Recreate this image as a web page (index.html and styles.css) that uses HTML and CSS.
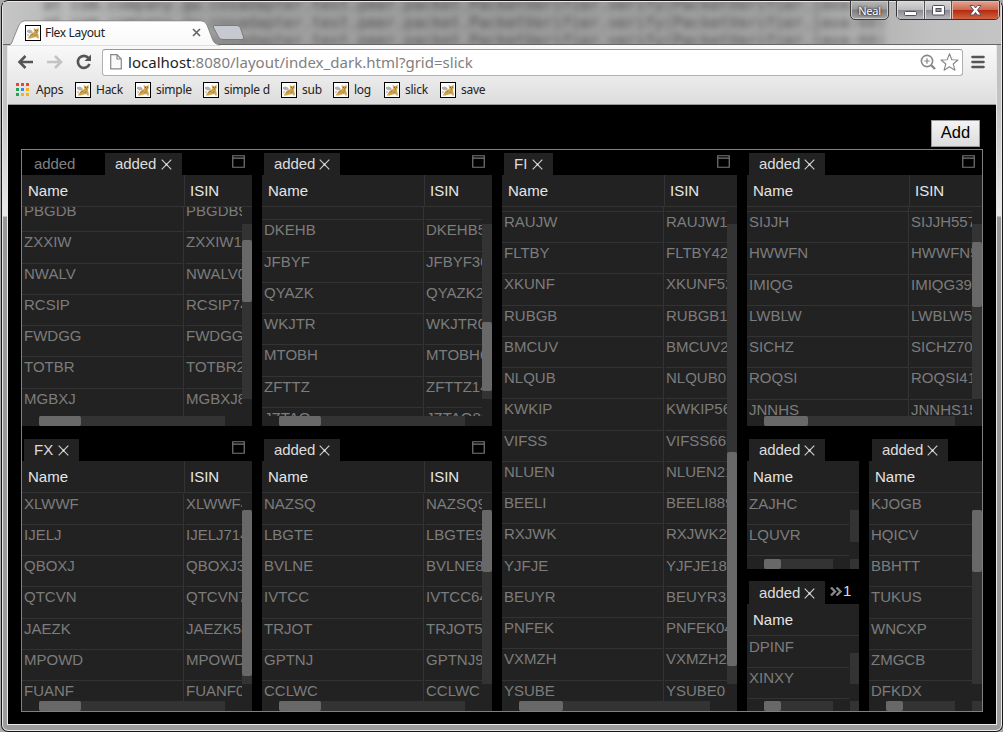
FILE: index.html
```
<!DOCTYPE html>
<html lang="en">
<head>
<meta charset="utf-8">
<title>Flex Layout</title>
<link rel="stylesheet" href="styles.css">
</head>
<body>
<svg width="0" height="0" class="defs">
  <defs>
    <symbol id="cat" viewBox="0 0 16 16">
      <rect x=".5" y=".5" width="15" height="15" fill="#fff" stroke="#000"/>
      <path d="M2 5l3-.5 2.500 1.500v2l-3 .5L2 7zM2 9.500l2-.5-1 3z" fill="#b3b2ab"/>
      <path d="M8.500 3l2 1 1.500 0 1.500-1.500.2 3.500-1 2 .8 2 .4 3.500-1.500 0-1-1.500-2.500.5-3.500 1H2.500L5 10l2-2 2.300-1z" fill="#d0a450"/>
      <path d="M10 5.500h1M12 5.300h1M11 7h1" stroke="#6b501f" stroke-width=".8"/>
      <path d="M5 10.500l3.500-1.500M9.500 10.500l2-1" stroke="#94702c" stroke-width=".7"/>
    </symbol>
    <symbol id="close" viewBox="0 0 11 11">
      <path d="M.7.7l9.600 9.600M10.300.7L.7 10.300" stroke="#ccc" stroke-width="1.200" fill="none"/>
      <rect x="4.700" y="4.700" width="1.600" height="1.600" fill="#fff"/>
    </symbol>
    <symbol id="max" viewBox="0 0 13 13">
      <path d="M.75.75h11.500v11.500H.75zM1 3.200h11" stroke="#777" stroke-width="1.200" fill="none"/>
    </symbol>
  </defs>
</svg>
<div class="window">
  <div class="titlebar">
    <div class="glass"><pre>at com.company.gw.cosadapter.test.peer.packet.PacketVerifier.verify(PacketVerifier.java:73)
at com.company.gw.cosadapter.test.peer.packet.PacketVerifier.verify(PacketVerifier.java:60)
at com.company.gw.cosadapter.test.peer.packet.PacketVerifier.verify(PacketVerifier.java:60)</pre></div>
    <div class="browser-tab">
      <svg class="tab-shape" width="240" height="26" viewBox="0 0 240 26">
        <defs><linearGradient id="tg" x1="0" y1="0" x2="0" y2="1"><stop offset="0" stop-color="#fff"/><stop offset="1" stop-color="#f8f8f8"/></linearGradient></defs>
        <path d="M0 26C5 25 5 22 7 17L12 5Q14 .8 18 .8H194Q198 .8 200 5L205 18Q207 24.500 212 24.500V26z" fill="url(#tg)" stroke="#777" stroke-width=".8"/>
        <path d="M0 25.500h212v.5H0z" fill="#f8f8f8"/>
        <path d="M207.500 5.500H230Q232.500 5.500 233.500 8L236.500 17Q237 19.500 235 19.500H216Q212.500 19.500 211.500 17L206.500 7.500Q206 5.500 207.500 5.500z" fill="#c6cad0" stroke="#737578" stroke-width=".9"/>
      </svg>
      <svg class="favicon" width="16" height="16"><use href="#cat"/></svg>
      <span class="tab-title">Flex Layout</span>
      <svg class="tab-close" width="9" height="9" viewBox="0 0 9 9"><path d="M1 1l7 7M8 1L1 8" stroke="#666" stroke-width="1.700"/></svg>
    </div>
    <div class="user-button">Neal</div>
    <div class="controls">
      <span class="ctl min"><svg width="13" height="6" viewBox="0 0 13 6"><rect x=".5" y=".5" width="12" height="4" rx="1" fill="#fff" stroke="#4e5060"/></svg></span>
      <span class="ctl restore"><svg width="13" height="11" viewBox="0 0 13 11"><rect x=".5" y=".5" width="12" height="9.500" rx="1" fill="#fff" stroke="#4e5060"/><rect x="4" y="3.500" width="5" height="3" fill="#999" stroke="#4e5060"/></svg></span>
      <span class="ctl quit"><svg width="13" height="11" viewBox="0 0 13 11"><path d="M1 .5h3.500L6.500 3 8.500.5H12L8.500 5 12 10H8.500L6.500 7.500 4.500 10H1L4.500 5z" fill="#fff" stroke="#57455a" stroke-width=".9"/></svg></span>
    </div>
  </div>
  <div class="client">
    <div class="toolbar">
      <svg class="nav" width="95" height="28" viewBox="0 0 95 28">
        <path d="M25 14H12M17.500 8L11.500 14l6 6" fill="none" stroke="#555" stroke-width="2.600"/>
        <path d="M39 14H52M47 8l6 6-6 6" fill="none" stroke="#c3c3c3" stroke-width="2.600"/>
        <path d="M80.500 10A6 6 0 1 0 81.500 16" fill="none" stroke="#555" stroke-width="2.600"/>
        <path d="M83 6.500V13h-6.500z" fill="#555"/>
      </svg>
      <div class="omnibox">
        <svg width="12" height="16" viewBox="0 0 12 16"><path d="M.7.7H7L11.300 5V14.800H.7zM7 .7V5h4.300" fill="#fafafa" stroke="#888" stroke-width="1.200"/></svg>
        <span class="url"><b>localhost</b>:8080/layout/index_dark.html?grid=slick</span>
        <svg class="end" width="42" height="20" viewBox="0 0 42 20"><circle cx="8" cy="9" r="5.600" fill="none" stroke="#888" stroke-width="1.600"/><path d="M12 13l4 4" stroke="#888" stroke-width="2.400"/><path d="M5.300 9h5.400M8 6.300v5.400" stroke="#888" stroke-width="1.200"/><path d="M30.500 1.800l2.300 5.900 6.200.3-4.800 4 1.700 6.200-5.400-3.500-5.400 3.500 1.700-6.200-4.800-4 6.200-.3z" fill="#fff" stroke="#888" stroke-width="1.100" stroke-linejoin="round"/></svg>
      </div>
      <svg class="menu" width="14" height="14" viewBox="0 0 14 14"><path d="M1.500 2h11M1.500 7h11M1.500 12h11" stroke="#555" stroke-width="2.600" stroke-linecap="round"/></svg>
    </div>
    <div class="bookmarks">
      <span class="bm"><svg class="apps" width="14" height="14" viewBox="0 0 14 14"><path d="M0 0h3v3H0zM5 0h3v3H5zM10 0h3v3h-3z" fill="#e8453c"/><path d="M0 5h3v3H0z" fill="#23a455"/><path d="M5 5h3v3H5z" fill="#3b87ee"/><path d="M10 5h3v3h-3zM5 10h3v3H5zM10 10h3v3h-3z" fill="#f4b512"/><path d="M0 10h3v3H0z" fill="#23a455"/></svg>Apps</span>
      <span class="bm"><svg width="16" height="16"><use href="#cat"/></svg>Hack</span>
      <span class="bm"><svg width="16" height="16"><use href="#cat"/></svg>simple</span>
      <span class="bm"><svg width="16" height="16"><use href="#cat"/></svg>simple d</span>
      <span class="bm"><svg width="16" height="16"><use href="#cat"/></svg>sub</span>
      <span class="bm"><svg width="16" height="16"><use href="#cat"/></svg>log</span>
      <span class="bm"><svg width="16" height="16"><use href="#cat"/></svg>slick</span>
      <span class="bm"><svg width="16" height="16"><use href="#cat"/></svg>save</span>
    </div>
    <div class="page">
      <div class="actions"><button class="add">Add</button></div>
      <div class="layout">
        <div class="stack">
          <section class="panel">
            <div class="tabs"><span class="tab idle">added</span><span class="tab on">added<svg><use href="#close"/></svg></span><svg class="maximize"><use href="#max"/></svg></div>
            <div class="grid g1">
              <div class="head"><span>Name</span><span>ISIN</span></div>
              <div class="view"><div class="rows">
                <div class="row"><span>PBGDB</span><span>PBGDB91</span></div>
                <div class="row"><span>ZXXIW</span><span>ZXXIW14</span></div>
                <div class="row"><span>NWALV</span><span>NWALV02</span></div>
                <div class="row"><span>RCSIP</span><span>RCSIP74</span></div>
                <div class="row"><span>FWDGG</span><span>FWDGG3</span></div>
                <div class="row"><span>TOTBR</span><span>TOTBR21</span></div>
                <div class="row"><span>MGBXJ</span><span>MGBXJ83</span></div>
              </div><i class="vbar"><i></i></i><i class="hbar"><i></i></i></div>
            </div>
          </section>
          <section class="panel">
            <div class="tabs"><span class="tab on fx">FX<svg><use href="#close"/></svg></span><svg class="maximize"><use href="#max"/></svg></div>
            <div class="grid g5">
              <div class="head"><span>Name</span><span>ISIN</span></div>
              <div class="view"><div class="rows">
                <div class="row"><span>XLWWF</span><span>XLWWF4</span></div>
                <div class="row"><span>IJELJ</span><span>IJELJ714</span></div>
                <div class="row"><span>QBOXJ</span><span>QBOXJ32</span></div>
                <div class="row"><span>QTCVN</span><span>QTCVN70</span></div>
                <div class="row"><span>JAEZK</span><span>JAEZK58</span></div>
                <div class="row"><span>MPOWD</span><span>MPOWD1</span></div>
                <div class="row"><span>FUANF</span><span>FUANF02</span></div>
              </div><i class="vbar"><i></i></i><i class="hbar"><i></i></i></div>
            </div>
          </section>
        </div>
        <div class="stack">
          <section class="panel">
            <div class="tabs"><span class="tab on">added<svg><use href="#close"/></svg></span><svg class="maximize"><use href="#max"/></svg></div>
            <div class="grid g2">
              <div class="head"><span>Name</span><span>ISIN</span></div>
              <div class="view"><div class="rows">
                <div class="row"><span></span><span></span></div>
                <div class="row"><span>DKEHB</span><span>DKEHB52</span></div>
                <div class="row"><span>JFBYF</span><span>JFBYF301</span></div>
                <div class="row"><span>QYAZK</span><span>QYAZK21</span></div>
                <div class="row"><span>WKJTR</span><span>WKJTR04</span></div>
                <div class="row"><span>MTOBH</span><span>MTOBH61</span></div>
                <div class="row"><span>ZFTTZ</span><span>ZFTTZ147</span></div>
                <div class="row"><span>JZTAQ</span><span>JZTAQ83</span></div>
              </div><i class="vbar"><i></i></i><i class="hbar"><i></i></i></div>
            </div>
          </section>
          <section class="panel">
            <div class="tabs"><span class="tab on">added<svg><use href="#close"/></svg></span><svg class="maximize"><use href="#max"/></svg></div>
            <div class="grid g6">
              <div class="head"><span>Name</span><span>ISIN</span></div>
              <div class="view"><div class="rows">
                <div class="row"><span>NAZSQ</span><span>NAZSQ93</span></div>
                <div class="row"><span>LBGTE</span><span>LBGTE91</span></div>
                <div class="row"><span>BVLNE</span><span>BVLNE83</span></div>
                <div class="row"><span>IVTCC</span><span>IVTCC64</span></div>
                <div class="row"><span>TRJOT</span><span>TRJOT51</span></div>
                <div class="row"><span>GPTNJ</span><span>GPTNJ92</span></div>
                <div class="row"><span>CCLWC</span><span>CCLWC</span></div>
              </div><i class="vbar"><i></i></i><i class="hbar"><i></i></i></div>
            </div>
          </section>
        </div>
        <div class="stack">
          <section class="panel">
            <div class="tabs"><span class="tab on fi">FI<svg><use href="#close"/></svg></span><svg class="maximize"><use href="#max"/></svg></div>
            <div class="grid g3">
              <div class="head"><span>Name</span><span>ISIN</span></div>
              <div class="view"><div class="rows">
                <div class="row"><span></span><span></span></div>
                <div class="row"><span>RAUJW</span><span>RAUJW1</span></div>
                <div class="row"><span>FLTBY</span><span>FLTBY42</span></div>
                <div class="row"><span>XKUNF</span><span>XKUNF52</span></div>
                <div class="row"><span>RUBGB</span><span>RUBGB1</span></div>
                <div class="row"><span>BMCUV</span><span>BMCUV2</span></div>
                <div class="row"><span>NLQUB</span><span>NLQUB0</span></div>
                <div class="row"><span>KWKIP</span><span>KWKIP56</span></div>
                <div class="row"><span>VIFSS</span><span>VIFSS665</span></div>
                <div class="row"><span>NLUEN</span><span>NLUEN21</span></div>
                <div class="row"><span>BEELI</span><span>BEELI889</span></div>
                <div class="row"><span>RXJWK</span><span>RXJWK2</span></div>
                <div class="row"><span>YJFJE</span><span>YJFJE18</span></div>
                <div class="row"><span>BEUYR</span><span>BEUYR3</span></div>
                <div class="row"><span>PNFEK</span><span>PNFEK04</span></div>
                <div class="row"><span>VXMZH</span><span>VXMZH2</span></div>
                <div class="row"><span>YSUBE</span><span>YSUBE0</span></div>
              </div><i class="vbar"><i></i></i><i class="hbar"><i></i></i></div>
            </div>
          </section>
        </div>
        <div class="stack">
          <section class="panel">
            <div class="tabs"><span class="tab on">added<svg><use href="#close"/></svg></span><svg class="maximize"><use href="#max"/></svg></div>
            <div class="grid g4">
              <div class="head"><span>Name</span><span>ISIN</span></div>
              <div class="view"><div class="rows">
                <div class="row"><span></span><span></span></div>
                <div class="row"><span>SIJJH</span><span>SIJJH557</span></div>
                <div class="row"><span>HWWFN</span><span>HWWFN5</span></div>
                <div class="row"><span>IMIQG</span><span>IMIQG394</span></div>
                <div class="row"><span>LWBLW</span><span>LWBLW5</span></div>
                <div class="row"><span>SICHZ</span><span>SICHZ70</span></div>
                <div class="row"><span>ROQSI</span><span>ROQSI41</span></div>
                <div class="row"><span>JNNHS</span><span>JNNHS15</span></div>
              </div><i class="vbar"><i></i></i><i class="hbar"><i></i></i></div>
            </div>
          </section>
          <div class="split">
            <div class="stack">
              <section class="panel">
                <div class="tabs"><span class="tab on">added<svg><use href="#close"/></svg></span></div>
                <div class="grid narrow g7">
                  <div class="head"><span>Name</span></div>
                  <div class="view"><div class="rows">
                    <div class="row"><span>ZAJHC</span></div>
                    <div class="row"><span>LQUVR</span></div>
                    <div class="row"><span></span></div>
                  </div><i class="vbar"></i><i class="hbar"><i></i></i><i class="corner"></i></div>
                </div>
              </section>
              <section class="panel">
                <div class="tabs tall"><span class="tab on">added<svg><use href="#close"/></svg></span><span class="overflow"><svg width="12" height="9" viewBox="0 0 12 9"><path d="M1 .5l4 4-4 4M6.500.5l4 4-4 4" fill="none" stroke="#888" stroke-width="2.400"/></svg>1</span></div>
                <div class="grid narrow g8">
                  <div class="head"><span>Name</span></div>
                  <div class="view"><div class="rows">
                    <div class="row"><span>DPINF</span></div>
                    <div class="row"><span>XINXY</span></div>
                    <div class="row"><span></span></div>
                  </div><i class="vbar"></i><i class="hbar"><i></i></i><i class="corner"></i></div>
                </div>
              </section>
            </div>
            <section class="panel right">
              <div class="tabs"><span class="tab on">added<svg><use href="#close"/></svg></span></div>
              <div class="grid narrow g9">
                <div class="head"><span>Name</span></div>
                <div class="view"><div class="rows">
                  <div class="row"><span>KJOGB</span></div>
                  <div class="row"><span>HQICV</span></div>
                  <div class="row"><span>BBHTT</span></div>
                  <div class="row"><span>TUKUS</span></div>
                  <div class="row"><span>WNCXP</span></div>
                  <div class="row"><span>ZMGCB</span></div>
                  <div class="row"><span>DFKDX</span></div>
                </div><i class="vbar"><i></i></i><i class="hbar"><i></i></i><i class="corner"></i></div>
              </div>
            </section>
          </div>
        </div>
      </div>
    </div>
  </div>
</div>
</body>
</html>
```

FILE: styles.css
```
* { box-sizing: border-box; }
body { margin: 0; background: #aaa; overflow: hidden; }
.defs { position: absolute; }
svg { display: block; flex: none; }

/* window frame */
.window {
  width: 1002px; height: 732px; margin-left: 1px; padding: 0 6px 7px;
  display: flex; flex-direction: column;
  border-radius: 7px; overflow: hidden;
  background: linear-gradient(#bdbdbd 0, #c4c4c4 110px, #e9e9e9 216px, #989898 217px, #9b9b9b);
  box-shadow: inset 0 0 0 1px #1c161c, inset 0 0 0 2px #e8e8e8;
  font-family: "Noto Sans", "Open Sans", sans-serif;
}
.titlebar { position: relative; height: 45px; flex: none; }
.glass {
  position: absolute; left: -4px; right: -4px; top: 2px; height: 43px; overflow: hidden;
  background: linear-gradient(90deg, #c6c6c6 0, #bcbcbc 40px, #a2a2a2 200px, #9c9c9c 500px, #a4a4a4 800px, #c0c0c0 930px, #c4c4c4);
  border-bottom: 1px solid #666;
}
.glass pre {
  margin: -6px 0 0 40px; font: 15.4px/18px "DejaVu Sans Mono", monospace;
  color: #303030; opacity: .75; filter: blur(3px);
}
.browser-tab { position: absolute; left: 0; top: 20px; width: 240px; height: 26px; z-index: 1; }
.tab-shape { position: absolute; left: 0; top: 0; }
.browser-tab { display: flex; align-items: center; padding: 0 0 1px 18px; }
.favicon, .tab-title, .tab-close { position: relative; }
.tab-title { width: 147px; margin-left: 4px; font-size: 12px; letter-spacing: -.35px; color: #222; }
.user-button {
  position: absolute; left: 843px; top: 0; width: 39px; height: 20px;
  border: 1px solid #3c3c3c; border-radius: 0 0 5px 5px;
  background: linear-gradient(#b5b5b5, #9a9a9a 45%, #7d7d7d 50%, #a5a5a5);
  box-shadow: inset 0 0 0 1px #ccc; color: #fff; text-align: center;
  font-size: 11px; line-height: 20px; letter-spacing: -.3px; text-shadow: 0 0 3px #222, 0 0 2px #222;
}
.controls {
  position: absolute; left: 889px; top: 0; height: 20px; display: flex;
  border: 1px solid #333; border-radius: 0 0 5px 5px; overflow: hidden;
}
.ctl { height: 19px; display: flex; align-items: center; justify-content: center; box-shadow: inset 0 0 0 1px #ddd; background: linear-gradient(#dadada, #bcbcbc 45%, #8c8c90 50%, #bdbdc2); }
.min { width: 28px; border-right: 1px solid #555; padding-top: 6px; }
.restore { width: 27px; border-right: 1px solid #555; }
.quit { width: 47px; background: linear-gradient(#e0a592, #cf6a50 45%, #b42c10 50%, #d4694a); box-shadow: inset 0 0 0 1px #e9b3a5; }

.client { flex: 1; display: flex; flex-direction: column; border: solid #e8e8e8; border-width: 0 1px 1px; min-height: 0; }
.toolbar { height: 34px; display: flex; align-items: center; background: linear-gradient(#f9f9f9, #eaeaea); flex: none; }
.nav { margin-right: -1px; }
.omnibox {
  width: 861px; height: 27px; display: flex; align-items: center; padding: 0 1px 0 7px;
  background: #fff; border: 1px solid #b0b0b0; border-top-color: #999; border-radius: 3px;
}
.url { margin-left: 6px; font-size: 15px; letter-spacing: .02px; color: #808080; white-space: nowrap; line-height: 20px; }
.url b { font-weight: 400; color: #1d1d1d; }
.end { margin-left: auto; }
.menu { margin-left: 8px; }
.bookmarks {
  height: 26px; flex: none; display: grid; align-items: center; padding: 0 0 4px 8px;
  grid-template-columns: 59px 60px 68px 78px 52px 51px 56px 60px;
  background: linear-gradient(#eaeaea, #dcdcdc); border-bottom: 1px solid #999;
}
.bm { display: flex; align-items: center; gap: 5px; font-size: 12px; letter-spacing: -.25px; color: #222; line-height: 16px; white-space: nowrap; }
.bm .apps { margin-right: 1px; }

/* page */
.page { flex: 1; min-height: 0; background: #000; padding: 15px 12px 12px 13px; display: flex; flex-direction: column; font-family: Arial, "Liberation Sans", sans-serif; font-size: 15px; }
.actions { display: flex; justify-content: flex-end; height: 29px; padding-right: 4px; flex: none; }
.add { width: 49px; height: 27px; padding: 0 0 2px; border: 1px solid #999; background: linear-gradient(#f3f3f3, #dcdcdc); font: 16.5px "Liberation Sans", Arial, sans-serif; color: #000; }
.layout { width: 962px; height: 563px; border: 1px solid #808080; display: grid; grid-template-columns: 230px 230px 235px 235px; gap: 10px; }
.stack { display: flex; flex-direction: column; gap: 10px; min-height: 0; min-width: 0; }
.panel { flex: 1 1 0; min-height: 0; display: flex; flex-direction: column; }
.stack > .panel:first-child:not(:last-child) { flex: 0 0 276px; }
.split { flex: 1; display: grid; grid-template-columns: 112px 113px; gap: 10px; min-height: 0; }
.split .stack > .panel:first-child { flex: 0 0 133px; }
.tabs { height: 25px; flex: none; display: flex; align-items: flex-end; padding-left: 2px; position: relative; }
.right .tabs { padding-left: 3px; }
.tab { height: 22px; padding: 0 10px; line-height: 22px; display: flex; align-items: center; letter-spacing: -.1px; }
.tab.on { width: 76px; background: #222; color: #ddd; }
.tab.on:nth-child(2) { width: 77px; }
.tab.fx { width: 55px; letter-spacing: 0; }
.tab.fi { width: 49px; letter-spacing: 0; }
.tall .tab { height: 23px; }
.tab.idle { width: 81px; color: #808080; }
.tab.on svg { width: 11px; height: 11px; margin: 1px 0 0 auto; }
.maximize { position: absolute; right: 7px; top: 5px; width: 13px; height: 13px; }
.overflow { align-self: flex-start; display: flex; align-items: center; margin: 2px 0 0 5px; gap: 1px; color: #ddd; line-height: 20px; }

.grid { flex: 1; min-height: 0; display: flex; flex-direction: column; background: #222; }
.head { height: 32px; flex: none; display: flex; border-bottom: 1px solid #333; color: #e6e6e6; line-height: 31px; }
.head span { width: 163px; height: 31px; padding-left: 6px; border-right: 1px solid #333; }
.head span:last-child { flex: 1; width: auto; padding-left: 5px; border: 0; }
.narrow .head span:last-child { padding-left: 6px; }
.view { flex: 1; min-height: 0; position: relative; overflow: hidden; padding: 0 10px 10px 0; }
.rows { height: 100%; overflow: hidden; color: #7c7c7c; }
.rows::before { content: ""; display: block; height: .6px; margin-top: var(--scroll, 0); }
.row { height: 31.25px; display: flex; gap: 1px; line-height: 20px; }
.row span { width: 162px; flex: none; padding-left: 2px; border: solid #333; border-width: 0 1px 1px 0; }
.row span + span { flex: 1; padding-left: 1px; border-right: 0; min-width: 0; overflow: hidden; white-space: nowrap; }
.narrow .row span { width: 100%; border-right: 0; }
.vbar { position: absolute; right: 0; top: 17px; bottom: 27px; width: 10px; background: #333; }
.narrow .vbar { width: 9px; }
.hbar { position: absolute; left: 17px; right: 27px; bottom: 0; height: 10px; background: #333; }
.vbar i, .hbar i { position: absolute; left: 0; top: var(--top, 0); width: 100%; height: var(--len, 62px); background: #686868; border-radius: 2px; }
.hbar i { top: 0; height: 100%; width: var(--wide, 42px); }
.corner { position: absolute; right: 0; bottom: 0; width: 9px; height: 10px; background: #333; }
.g7 .hbar, .g8 .hbar { right: 26px; }
.g9 .vbar, .g9 .corner { width: 10px; }
.g1 { --scroll: -6.500px; --top: 16px; }
.g2 { --scroll: -18.500px; --top: 98px; --len: 69px; }
.g3 { --scroll: -27px; --top: 228px; --len: 214px; --wide: 44px; }
.g4 { --scroll: -26.750px; --top: 18px; --len: 65px; --wide: 44px; }
.g5 { --len: 166px; }
.narrow { --wide: 17px; }
```
